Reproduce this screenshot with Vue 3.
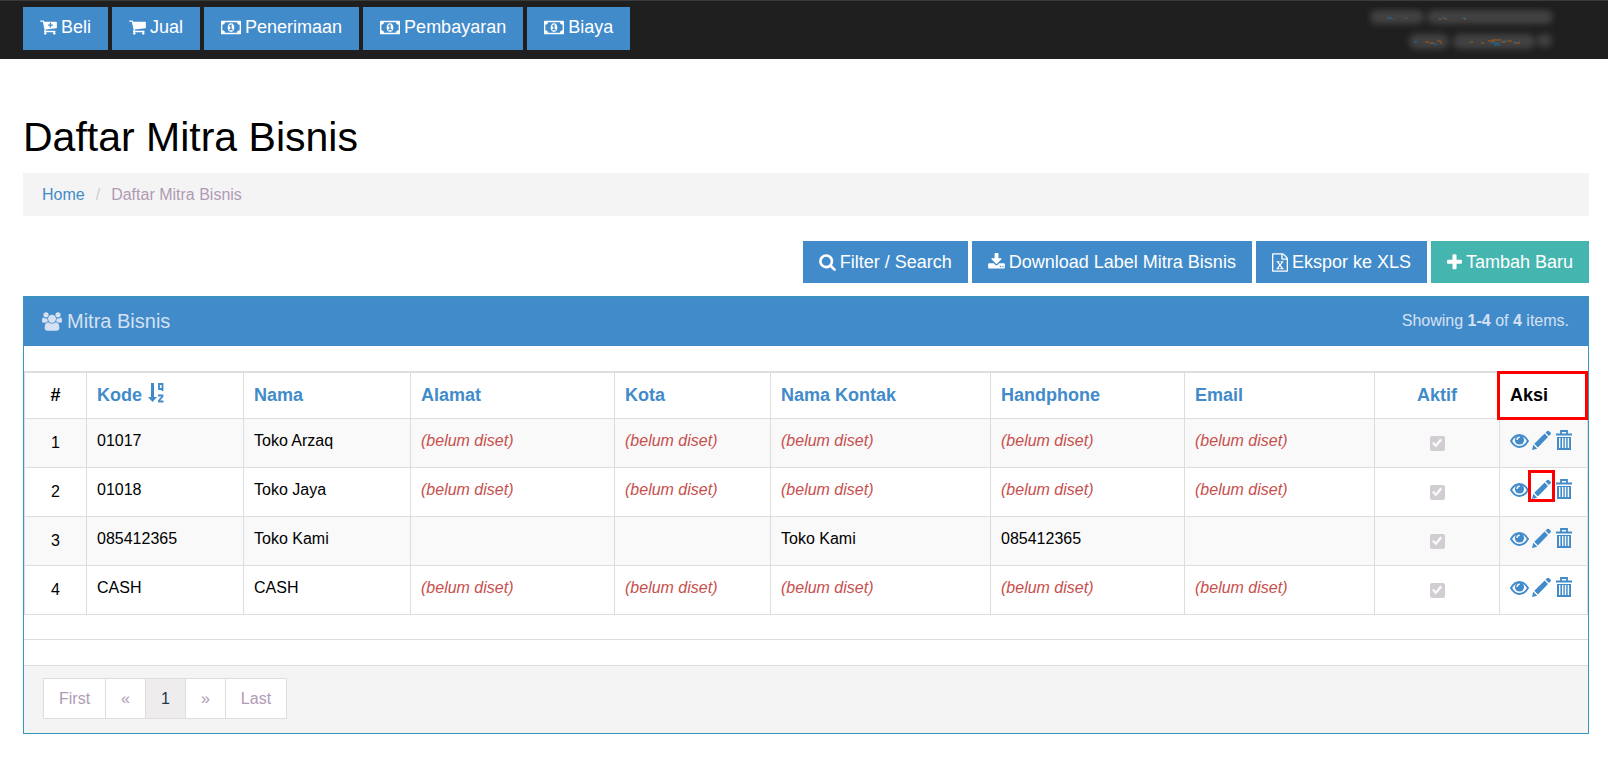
<script setup>
const cart = 'M704 1536q0 52-38 90t-90 38-90-38-38-90 38-90 90-38 90 38 38 90zm896 0q0 52-38 90t-90 38-90-38-38-90 38-90 90-38 90 38 38 90zm128-1088v512q0 24-16.5 42.5t-40.5 21.5l-1044 122q13 60 13 70 0 16-24 64h920q26 0 45 19t19 45-19 45-45 19h-1024q-26 0-45-19t-19-45q0-11 8-31.5t16-36 21.5-40 15.5-29.5l-177-823h-204q-26 0-45-19t-19-45 19-45 45-19h256q16 0 28.5 6.5t19.5 15.5 13 24.5 8 26 5.5 29.5 4.5 26h1201q26 0 45 19t19 45z'

const icons = {
  cart: { box: '64 0 1664 1792', w: 17, h: 18, d: cart },
  cartPlus: {
    box: '64 0 1664 1792', w: 17, h: 18,
    d: cart + 'M1344 704q0-26-19-45t-45-19h-128v-128q0-26-19-45t-45-19-45 19-19 45v128h-128q-26 0-45 19t-19 45 19 45 45 19h128v128q0 26 19 45t45 19 45-19 19-45v-128h128q26 0 45-19t19-45z',
  },
  money: {
    box: '0 0 1920 1792', w: 20, h: 19,
    d: 'M768 1152h384v-96h-128v-448h-114l-148 137 77 80q42-37 55-57h2v288h-128v96zm512-256q0 70-21 142t-59.5 134-101.5 101-138 39-138-39-101.5-101-59.5-134-21-142 21-142 59.5-134 101.5-101 138-39 138 39 101.5 101 59.5 134 21 142zm512 256v-512q-106 0-181-75t-75-181h-1152q0 106-75 181t-181 75v512q106 0 181 75t75 181h1152q0-106 75-181t181-75zm128-832v1152q0 26-19 45t-45 19h-1792q-26 0-45-19t-19-45v-1152q0-26 19-45t45-19h1792q26 0 45 19t19 45z',
  },
  search: {
    box: '64 0 1664 1792', w: 17, h: 18,
    d: 'M1216 832q0-185-131.5-316.5t-316.5-131.5-316.5 131.5-131.5 316.5 131.5 316.5 316.5 131.5 316.5-131.5 131.5-316.5zm512 832q0 52-38 90t-90 38q-54 0-90-38l-343-342q-179 124-399 124-143 0-273.5-55.5t-225-150-150-225-55.5-273.5 55.5-273.5 150-225 225-150 273.5-55.5 273.5 55.5 225 150 150 225 55.5 273.5q0 220-124 399l343 343q37 37 37 90z',
  },
  download: {
    box: '64 0 1664 1792', w: 17, h: 18,
    d: 'M1344 1344q0-26-19-45t-45-19-45 19-19 45 19 45 45 19 45-19 19-45zm256 0q0-26-19-45t-45-19-45 19-19 45 19 45 45 19 45-19 19-45zm128-224v320q0 40-28 68t-68 28h-1472q-40 0-68-28t-28-68v-320q0-40 28-68t68-28h465l135 136q58 56 136 56t136-56l136-136h464q40 0 68 28t28 68zm-325-569q17 41-14 70l-448 448q-18 19-45 19t-45-19l-448-448q-31-29-14-70 17-39 59-39h256v-448q0-26 19-45t45-19h256q26 0 45 19t19 45v448h256q42 0 59 39z',
  },
  excel: {
    box: '128 0 1536 1792', w: 16, h: 19,
    d: 'M1596 380q28 28 48 76t20 88v1152q0 40-28 68t-68 28h-1344q-40 0-68-28t-28-68v-1600q0-40 28-68t68-28h896q40 0 88 20t76 48zm-444-244v376h376q-10-29-22-41l-313-313q-12-12-41-22zm384 1528v-1024h-416q-40 0-68-28t-28-68v-416h-768v1536h1280zm-979-234v106h281v-106h-75l103-161q5-7 10-16.5t7.5-13.5 3.5-4h2q1 4 5 10 2 4 4.5 7.5t6 8 6.5 8.5l107 161h-76v106h291v-106h-68l-192-273 195-282h67v-107h-279v107h74l-103 159q-4 7-10 16.5t-9 13.5l-2 3h-2q-1-4-5-10-6-11-17-23l-106-159h76v-107h-290v107h68l189 272-194 283h-68z',
  },
  plus: {
    box: '192 0 1408 1792', w: 15, h: 19,
    d: 'M1600 736v192q0 40-28 68t-68 28h-416v416q0 40-28 68t-68 28h-192q-40 0-68-28t-28-68v-416h-416q-40 0-68-28t-28-68v-192q0-40 28-68t68-28h416v-416q0-40 28-68t68-28h192q40 0 68 28t28 68v416h416q40 0 68 28t28 68z',
  },
  users: {
    box: '0 0 1920 1792', w: 20, h: 19,
    d: 'M593 896q-162 5-265 128h-134q-82 0-138-40.5t-56-118.5q0-353 124-353 6 0 43.5 21t97.5 42.5 119 21.5q67 0 133-23-5 37-5 66 0 139 81 256zm1071 637q0 120-73 189.5t-194 69.5h-874q-121 0-194-69.5t-73-189.5q0-53 3.5-103.5t14-109 26.5-108.5 43-97.5 62-81 85.5-53.5 111.5-20q10 0 43 21.5t73 48 107 48 135 21.5 135-21.5 107-48 73-48 43-21.5q61 0 111.5 20t85.5 53.5 62 81 43 97.5 26.5 108.5 14 109 3.5 103.5zm-1024-1277q0 106-75 181t-181 75-181-75-75-181 75-181 181-75 181 75 75 181zm704 384q0 159-112.5 271.5t-271.5 112.5-271.5-112.5-112.5-271.5 112.5-271.5 271.5-112.5 271.5 112.5 112.5 271.5zm576 225q0 78-56 118.5t-138 40.5h-134q-103-123-265-128 81-117 81-256 0-29-5-66 66 23 133 23 59 0 119-21.5t97.5-42.5 43.5-21q124 0 124 353zm-128-609q0 106-75 181t-181 75-181-75-75-181 75-181 181-75 181 75 75 181z',
  },
}

const navButtons = [
  { label: 'Beli', icon: icons.cartPlus },
  { label: 'Jual', icon: icons.cart },
  { label: 'Penerimaan', icon: icons.money },
  { label: 'Pembayaran', icon: icons.money },
  { label: 'Biaya', icon: icons.money },
]

const toolButtons = [
  { label: 'Filter / Search', icon: icons.search },
  { label: 'Download Label Mitra Bisnis', icon: icons.download },
  { label: 'Ekspor ke XLS', icon: icons.excel },
  { label: 'Tambah Baru', icon: icons.plus, success: true },
]

const columns = [
  { key: 'kode', label: 'Kode', sorted: true },
  { key: 'nama', label: 'Nama' },
  { key: 'alamat', label: 'Alamat' },
  { key: 'kota', label: 'Kota' },
  { key: 'kontak', label: 'Nama Kontak' },
  { key: 'handphone', label: 'Handphone' },
  { key: 'email', label: 'Email' },
]

// null is an unset value, an empty string is a value saved blank
const rows = [
  { kode: '01017', nama: 'Toko Arzaq', alamat: null, kota: null, kontak: null, handphone: null, email: null },
  { kode: '01018', nama: 'Toko Jaya', alamat: null, kota: null, kontak: null, handphone: null, email: null, marked: true },
  { kode: '085412365', nama: 'Toko Kami', alamat: '', kota: '', kontak: 'Toko Kami', handphone: '085412365', email: '' },
  { kode: 'CASH', nama: 'CASH', alamat: null, kota: null, kontak: null, handphone: null, email: null },
]

const pages = ['First', '«', '1', '»', 'Last']
</script>

<template>
  <div class="page">
    <header class="topbar">
      <nav class="button-row">
        <button v-for="b in navButtons" :key="b.label" type="button" class="btn">
          <svg :viewBox="b.icon.box" :width="b.icon.w" :height="b.icon.h" aria-hidden="true">
            <path :d="b.icon.d" fill="currentColor" fill-rule="evenodd" />
          </svg>
          <span>{{ b.label }}</span>
        </button>
      </nav>
      <svg class="account" viewBox="0 0 190 48" width="190" height="48" aria-hidden="true">
        <g class="haze">
          <rect x="3" y="3" width="54" height="14" rx="7" />
          <rect x="60" y="3" width="126" height="14" rx="7" />
          <rect x="42" y="27" width="40" height="15" rx="7" />
          <rect x="86" y="27" width="82" height="15" rx="7" />
          <rect x="170" y="27" width="15" height="13" rx="6" />
        </g>
        <g fill="none" stroke-width="1">
          <path stroke="#a85a14" d="M26 12h1M39 11h1M72 12h2M78 12h2M97 12h2M58 35h4M63 36h4M70 34h4M73 36h2M103 35h3M114 36h3M121 34h7M125 33h9M134 35h5M140 34h5M147 36h6" />
          <path stroke="#1d6fa8" d="M20 11h5M37 11h1M75 11h3M95 11h3M47 35h3M66 37h4M101 36h1M124 36h9M127 38h6M136 34h3M146 35h2M152 35h1" />
        </g>
      </svg>
    </header>

    <main class="content">
      <h1>Daftar Mitra Bisnis</h1>

      <nav class="breadcrumb" aria-label="Breadcrumb">
        <a href="#">Home</a>
        <span class="slash">/</span>
        <span>Daftar Mitra Bisnis</span>
      </nav>

      <div class="button-row tools">
        <button v-for="b in toolButtons" :key="b.label" type="button" class="btn" :class="{ success: b.success }">
          <svg :viewBox="b.icon.box" :width="b.icon.w" :height="b.icon.h" aria-hidden="true">
            <path :d="b.icon.d" fill="currentColor" fill-rule="evenodd" />
          </svg>
          <span>{{ b.label }}</span>
        </button>
      </div>

      <section class="panel">
        <div class="panel-heading">
          <h2>
            <svg :viewBox="icons.users.box" :width="icons.users.w" :height="icons.users.h" aria-hidden="true">
              <path :d="icons.users.d" fill="currentColor" />
            </svg>
            <span>Mitra Bisnis</span>
          </h2>
          <div class="summary">Showing <b>1-4</b> of <b>4</b> items.</div>
        </div>

        <table>
          <colgroup>
            <col class="c-no"><col class="c-kode"><col class="c-nama"><col class="c-alamat"><col class="c-kota">
            <col class="c-kontak"><col class="c-hp"><col class="c-email"><col class="c-aktif"><col class="c-aksi">
          </colgroup>
          <thead>
            <tr>
              <th scope="col" class="center">#</th>
              <th v-for="c in columns" :key="c.key" scope="col">
                <a href="#" class="sort">
                  <span>{{ c.label }}</span>
                  <svg v-if="c.sorted" viewBox="0 0 16 20" width="16" height="20" aria-hidden="true">
                    <path d="M3 0h3v14h3l-4.500 5L0 14h3z" fill="currentColor" />
                    <path d="M11 1h3.500v5H11zM14.500 5v3M10 12.500h4.500v1L11 17.500v1h4.500" fill="none" stroke="currentColor" stroke-width="1.800" />
                  </svg>
                </a>
              </th>
              <th scope="col" class="center"><a href="#">Aktif</a></th>
              <th scope="col" class="marked">Aksi<span class="marker"></span></th>
            </tr>
          </thead>
          <tbody>
            <tr v-for="(r, i) in rows" :key="r.kode">
              <td class="center middle">{{ i + 1 }}</td>
              <td v-for="c in columns" :key="c.key">
                <em v-if="r[c.key] === null">(belum diset)</em>
                <template v-else>{{ r[c.key] }}</template>
              </td>
              <td class="center middle">
                <input type="checkbox" checked disabled :aria-label="'Aktif ' + r.nama">
              </td>
              <td>
                <div class="actions">
                  <a href="#" aria-label="Lihat">
                    <svg viewBox="0 0 19 22" width="19" height="22">
                      <path d="M1 12Q4.500 6 9.500 6T18 12Q14.500 18 9.500 18T1 12z" fill="none" stroke="currentColor" stroke-width="1.900" />
                      <circle cx="9.500" cy="11" r="4.600" fill="currentColor" />
                      <path d="M9.700 8.300A2.600 2.600 0 0 0 7 11" fill="none" stroke="#fff" stroke-width="1.400" />
                    </svg>
                  </a>
                  <a href="#" aria-label="Ubah" class="edit">
                    <svg viewBox="0 0 19 22" width="19" height="22">
                      <path d="M0 21l1.300-5.200L5.200 19.700zM2.300 14.800L12.600 4.500L16 8L5.900 18.500zM13.500 3.600L15.200 2q1-.700 1.900.200L18.500 3.600q.800 1 0 1.900L16.900 7.100z" fill="currentColor" />
                    </svg>
                    <span v-if="r.marked" class="marker"></span>
                  </a>
                  <a href="#" aria-label="Hapus" class="trash">
                    <svg viewBox="0 0 16 22" width="16" height="22">
                      <path d="M0 5.500h16M5 5V2h6v3" fill="none" stroke="currentColor" stroke-width="1.800" />
                      <path d="M1 8h14V21H1zM3 9v10h1.400V9zM6 9v10h1.400V9zM8.800 9v10h1.400V9zM11.700 9v10h1.400V9z" fill="currentColor" fill-rule="evenodd" />
                    </svg>
                  </a>
                </div>
              </td>
            </tr>
          </tbody>
        </table>

        <div class="after-table"></div>

        <div class="panel-footer">
          <ul class="pagination">
            <li v-for="p in pages" :key="p" :class="{ active: p === '1' }"><a href="#">{{ p }}</a></li>
          </ul>
        </div>
      </section>
    </main>
  </div>
</template>

<style>
body {
  margin: 0;
  background: #fff;
}
</style>

<style scoped>
* {
  box-sizing: border-box;
}

.page {
  font-family: "Liberation Sans", Arial, Helvetica, sans-serif;
  font-size: 16px;
  line-height: 24px;
  color: #000;
}

a {
  color: #428bca;
  text-decoration: none;
}

svg {
  display: block;
  flex: none;
}

.topbar {
  display: flex;
  justify-content: space-between;
  padding: 6px 51px 9px 23px;
  background: #1f1f1f;
  border-top: 1px solid #3a3a3a;
}

.account {
  margin-bottom: -5px;
}

.haze {
  fill: #424242;
  filter: blur(3px);
}

.button-row {
  display: flex;
  flex-wrap: wrap;
  gap: 4px;
}

.btn {
  display: inline-flex;
  align-items: center;
  gap: 4px;
  padding: 9px 16px;
  border: 0;
  background: #428bca;
  color: #fff;
  font: inherit;
  font-size: 18px;
  line-height: 24px;
  white-space: nowrap;
}

.topbar .btn {
  padding: 8px 17px 11px;
}

.btn.success {
  background: #45b6af;
}

.content {
  padding: 54px 19px 47px 23px;
}

h1 {
  margin: 0 0 12px;
  font-size: 41px;
  font-weight: 400;
  line-height: 48px;
}

.breadcrumb {
  display: flex;
  gap: 11px;
  padding: 10px 19px 9px;
  background: #f4f4f4;
  color: #b09ab4;
}

.slash {
  color: #ccc;
}

.tools {
  justify-content: flex-end;
  margin: 25px 0 13px;
}

.panel {
  border: 1px solid #3598bb;
}

.panel-heading {
  display: flex;
  align-items: center;
  justify-content: space-between;
  margin-bottom: 25px;
  padding: 12px 19px 13px 18px;
  background: #428bca;
  color: #d5e1f3;
}

h2 {
  display: flex;
  align-items: center;
  gap: 5px;
  margin: 0;
  font-size: 20px;
  font-weight: 400;
  line-height: 24px;
}

table {
  width: 100%;
  table-layout: fixed;
  border-collapse: separate;
  border-spacing: 0;
}

.c-no { width: 63px; }
.c-kode { width: 157px; }
.c-nama { width: 167px; }
.c-alamat { width: 204px; }
.c-kota { width: 156px; }
.c-kontak { width: 220px; }
.c-hp { width: 194px; }
.c-email { width: 190px; }
.c-aktif { width: 125px; }
.c-aksi { width: 88px; }

th,
td {
  padding: 10px;
  border: 0 solid #ddd;
  border-width: 0 1px 1px 0;
  text-align: left;
  vertical-align: top;
}

th {
  padding-bottom: 11px;
  border-top-width: 2px;
  font-size: 18px;
}

td {
  padding-bottom: 14px;
}

th:first-child,
td:first-child {
  border-left-width: 1px;
}

tbody tr:nth-child(odd) {
  background: #f9f9f9;
}

.center {
  text-align: center;
}

td.middle {
  padding: 12px 10px;
  vertical-align: middle;
}

.sort {
  display: flex;
  align-items: flex-start;
  gap: 6px;
}

em {
  color: #c7504e;
}

.marked,
.edit {
  position: relative;
}

.marker {
  position: absolute;
  border: 3px solid #f00;
}

th .marker {
  inset: -2px -1px -2px -3px;
}

.edit .marker {
  inset: -8px -4px -2px;
}

input[type="checkbox"] {
  appearance: none;
  display: block;
  width: 15px;
  height: 15px;
  margin: 0 auto;
  border-radius: 2px;
  background: #d2cdd3;
}

input[type="checkbox"]::before {
  content: "";
  display: block;
  width: 15px;
  height: 15px;
  background: #fafafa;
  clip-path: polygon(17% 52%, 29% 42%, 41% 58%, 72% 20%, 84% 31%, 42% 80%);
}

.actions {
  display: flex;
  gap: 3px;
}

.trash {
  margin-left: 2px;
}

.after-table {
  height: 26px;
  margin-top: 24px;
  border-top: 1px solid #ddd;
}

.panel-footer {
  padding: 12px 19px 14px;
  border-top: 1px solid #ddd;
  background: #f4f4f4;
}

.pagination {
  display: flex;
  margin: 0;
  padding: 0;
  list-style: none;
}

.pagination a {
  display: block;
  padding: 8px 15px 7px;
  border: 1px solid #ddd;
  background: #fff;
  color: #b09ab4;
}

.pagination li + li {
  margin-left: -1px;
}

.pagination .active a {
  background: #eeecec;
  color: #23374c;
}
</style>
